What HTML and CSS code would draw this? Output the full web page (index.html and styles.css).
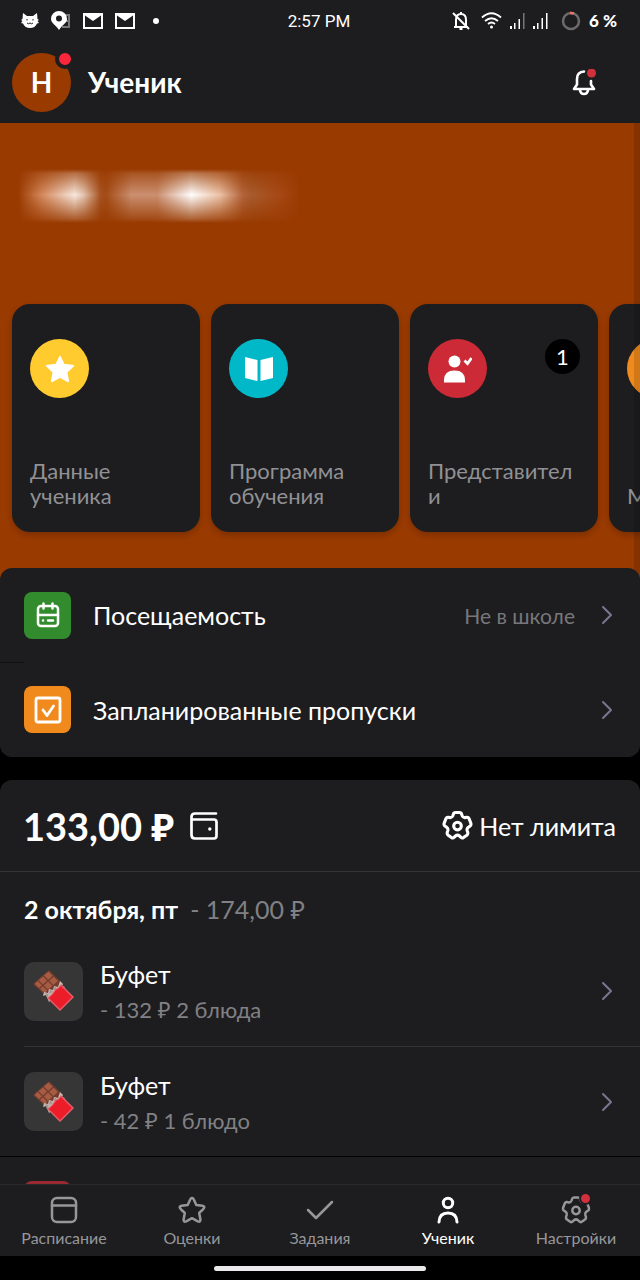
FILE: index.html
```html
<!DOCTYPE html>
<html lang="ru">
<head>
<meta charset="utf-8">
<meta name="viewport" content="width=device-width, initial-scale=1">
<title>Ученик</title>
<link rel="stylesheet" href="styles.css">
</head>
<body>
<svg class="defs" aria-hidden="true">
  <symbol id="gear" viewBox="0 0 30 30">
    <path d="M13 2.4H17Q18.6 2.4 19 4L19.5 5.6Q20.3 7.6 22.3 7.4L24 7.1Q25.5 6.9 26.2 8.4L27.9 12.8Q28.4 14.6 27.2 15.5L25.3 16.8Q23.9 18 24.3 19.8L24.9 21.6Q25.4 23.3 24 24.4L20.8 26.7Q19.4 27.6 18.3 26.4L17 25.2Q15 23.6 13 25.2L11.7 26.4Q10.6 27.6 9.2 26.7L6 24.4Q4.6 23.3 5.1 21.6L5.7 19.8Q6.1 18 4.7 16.8L2.8 15.5Q1.6 14.6 2.1 12.8L3.8 8.4Q4.5 6.9 6 7.1L7.7 7.4Q9.7 7.6 10.5 5.6L11 4Q11.4 2.4 13 2.4Z"/>
    <circle cx="15" cy="15.500" r="3.700"/>
  </symbol>
  <symbol id="chevron" viewBox="0 0 12 20">
    <path d="M2 2l8 8-8 8"/>
  </symbol>
  <symbol id="chocolate" viewBox="0 0 42 42">
    <path fill="#743c2b" d="M15 1Q16 0 17 1L30 14 13 26 1 15Q0 14 1 13Z"/>
    <path fill="#a65b45" d="M15.500 1.500l4.200 4.200-4.500 4-4.300-4.200zM20.700 6.700l4.200 4.200-4.500 4-4.300-4.200zM9.900 6.400l4.300 4.200-4.300 3.900-4.300-4.200zM15.100 11.600l4.300 4.200-4.300 3.900-4.300-4.200zM4.700 11.100l4.300 4.200-3 2.800-4.300-4.200zM9.800 16.300l4.300 4.200-2 2.800-5-4.300z"/>
    <path fill="#c9b9b4" d="M27 11l3 3-1 2 3 1-16 15-3-7-3 1 1-4 4 1 1-4 4 1 1-4 4 1z"/>
    <path fill="#a39590" d="M12 22l4 3-2 3zM17 19l3 3-4 2zM22 16l2 3-4 1z"/>
    <path fill="#e2606b" d="M28 14L41 27 27 41 14 28Q20 24 22 19Q26 18 28 14Z"/>
    <path fill="#ed1c29" d="M28 16L39 27 27 39 16 28Q21 24 23 20Q26 19 28 16Z"/>
  </symbol>
</svg>

<div class="app">
  <header class="top">
    <div class="status">
      <div class="status-left">
        <svg width="18" height="16" viewBox="0 0 18 16"><path fill="#fff" d="M2 0l4 3h6l4-3 .5 6 1.500 1-1.500 1 1.500 2-2 .5Q14 15 9 15T2 10.500L0 10l1.500-2L0 7l1.500-1z"/><path d="M6 6v1.500M12 6v1.500M6 10q1.500 1.500 3 0 1.500 1.500 3 0" fill="none" stroke="#1d1d1f" stroke-width="1"/></svg>
        <svg width="20" height="19" viewBox="0 0 20 19"><path d="M12 4h6v12h-7" fill="none" stroke="#77777a" stroke-width="2"/><path d="M12 10h6" stroke="#77777a" stroke-width="2"/><path fill="#fff" fill-rule="evenodd" d="M8 0a8 8 0 0 1 8 8c0 4-4 5-8 11C5 14 0 12 0 8a8 8 0 0 1 8-8zm0 4.500a3 3 0 1 0 0 6 3 3 0 0 0 0-6z"/></svg>
        <svg width="20" height="16" viewBox="0 0 20 16"><path fill="#fff" d="M0 0h20v16H0z"/><path fill="#1d1d1f" d="M2 2.500L10 8l8-5.500V14H2z"/><path fill="#fff" d="M4 0l6 6 6-6z"/></svg>
        <svg width="20" height="16" viewBox="0 0 20 16"><path fill="#fff" d="M0 0h20v16H0z"/><path fill="#1d1d1f" d="M2 2.500L10 8l8-5.500V14H2z"/><path fill="#fff" d="M4 0l6 6 6-6z"/></svg>
        <span class="status-dot"></span>
      </div>
      <time class="clock">2:57 PM</time>
      <div class="status-right">
        <svg class="muted" width="18" height="20" viewBox="0 0 18 20" fill="none" stroke="#fff" stroke-width="2"><path d="M4 15V9q0-6 5-6t5 6v6M2 16h14M9 1v2M1 2l16 16"/><path d="M7.500 18h3"/></svg>
        <svg width="21" height="17" viewBox="0 0 21 17" fill="none" stroke="#fff" stroke-width="1.700"><path d="M1 5.500Q10.500-3 20 5.500M4 9q6.500-5.500 13 0M7 12q3.500-3 7 0"/><circle cx="10.500" cy="15" r="1.500" fill="#fff" stroke="none"/></svg>
        <svg width="15" height="17" viewBox="0 0 15 17" fill="#fff"><path d="M0 14h2v3H0zM4 11h1.500v6H4zM8.500 7H10v10H8.500z"/><path fill="#77777a" d="M13 1h1.500v16H13z"/></svg>
        <svg width="15" height="17" viewBox="0 0 15 17" fill="#fff"><path d="M0 14h2v3H0zM4 11h1.500v6H4zM8.500 6H10v11H8.500zM13 1h1.500v16H13z"/></svg>
        <svg class="battery" width="20" height="20" viewBox="0 0 20 20" fill="none" stroke-width="2.500"><circle cx="10" cy="10" r="8" stroke="#6b6b6d"/><path d="M9 2q2-.2 4 .5" stroke="#ee7565"/></svg>
        <span>6 %</span>
      </div>
    </div>
    <div class="titlebar">
      <button class="avatar" aria-label="Профиль">Н<span class="avatar-dot"></span></button>
      <h1>Ученик</h1>
      <button class="bell" aria-label="Уведомления">
        <svg width="24" height="27" viewBox="0 0 24 27" fill="none" stroke="#fff" stroke-width="2.600" stroke-linecap="round" stroke-linejoin="round"><path d="M12 2.500Q5 2.800 5 10v5.500l-3 4.500h20l-3-4.500V12"/><path d="M8 21q.5 4 4 4t4-4"/><circle cx="19.500" cy="4" r="4.500" fill="#d2303d" stroke="none"/></svg>
      </button>
    </div>
  </header>

  <main class="content">
    <section class="hero">
      <div class="hidden-name"></div>
      <nav class="cards" aria-label="Разделы">
        <a class="card" href="#data">
          <span class="disc yellow"><svg width="30" height="28" viewBox="0 0 30 28"><path fill="#fff" stroke="#fff" stroke-width="1.500" stroke-linejoin="round" d="M15 1.500l4 8 9.500 1.300-6.800 6.400 1.700 9.300-8.400-4.400-8.400 4.400 1.700-9.300L1.500 10.800 11 9.500z"/></svg></span>
          <span class="card-label">Данные ученика</span>
        </a>
        <a class="card" href="#program">
          <span class="disc teal"><svg width="28" height="24" viewBox="0 0 28 24" fill="#fff"><path d="M0 0l12.500 3v21L0 21zM28 0L15.500 3v21L28 21z"/></svg></span>
          <span class="card-label">Программа обучения</span>
        </a>
        <a class="card" href="#guardians">
          <span class="disc red"><svg width="28" height="28" viewBox="0 0 28 28" fill="#fff"><circle cx="10.500" cy="6.500" r="6"/><path d="M0 27.500V25q0-9.500 10.500-9.500T21 25v2.500z"/><path d="M20.500 5.500l3 3 4-5.500" fill="none" stroke="#fff" stroke-width="2.800"/></svg></span>
          <span class="count">1</span>
          <span class="card-label">Представители</span>
        </a>
        <a class="card" href="#more">
          <span class="disc orange"></span>
          <span class="card-label">М</span>
        </a>
      </nav>
      <span class="scroll-shade"></span>
    </section>

    <section class="panel attendance">
      <a class="row" href="#attendance">
        <span class="tile green"><svg width="24" height="26" viewBox="0 0 24 26" fill="none" stroke="#fff" stroke-width="2.500" stroke-linecap="round"><rect x="2" y="4" width="20" height="20" rx="3"/><path d="M2 13h20M7.500 1.500v5M16.500 1.500v5M7 18.500h.1M12 18.500h5"/></svg></span>
        <span class="row-title">Посещаемость</span>
        <span class="row-note">Не в школе</span>
        <svg class="chevron" width="12" height="20"><use href="#chevron"/></svg>
      </a>
      <a class="row" href="#absences">
        <span class="tile amber"><svg width="28" height="28" viewBox="0 0 28 28" fill="none" stroke="#fff" stroke-width="2.800" stroke-linecap="round" stroke-linejoin="round"><rect x="2" y="2" width="24" height="24" rx="2"/><path d="M9 14l4 5.500L19.500 10"/></svg></span>
        <span class="row-title">Запланированные пропуски</span>
        <svg class="chevron" width="12" height="20"><use href="#chevron"/></svg>
      </a>
    </section>

    <section class="panel money">
      <div class="balance">
        <strong>133,00 ₽</strong>
        <svg width="28" height="28" viewBox="0 0 28 28" fill="none" stroke="#fff" stroke-width="2.700" stroke-linecap="round" stroke-linejoin="round"><path d="M26 1.500H5Q1.500 1.500 1.500 5v18Q1.500 26.500 5 26.500h19q2.500 0 2.500-3V10Q26.500 7.500 24 7.500H2"/><circle cx="19.800" cy="17" r="1.700" fill="#fff" stroke="none"/></svg>
        <button class="limit"><svg class="gear" width="31" height="31"><use href="#gear"/></svg>Нет лимита</button>
      </div>
      <h2 class="day">2 октября, пт <span>- 174,00 ₽</span></h2>
      <a class="purchase" href="#p1">
        <span class="thumb"><svg width="42" height="42"><use href="#chocolate"/></svg></span>
        <span class="purchase-text"><span>Буфет</span><small>- 132 ₽ 2 блюда</small></span>
        <svg class="chevron" width="12" height="20"><use href="#chevron"/></svg>
      </a>
      <a class="purchase" href="#p2">
        <span class="thumb"><svg width="42" height="42"><use href="#chocolate"/></svg></span>
        <span class="purchase-text"><span>Буфет</span><small>- 42 ₽ 1 блюдо</small></span>
        <svg class="chevron" width="12" height="20"><use href="#chevron"/></svg>
      </a>
    </section>
    <section class="next"><span class="tile crimson"></span></section>
  </main>

  <nav class="tabs" aria-label="Основная навигация">
    <a href="#schedule"><svg width="30" height="30" viewBox="0 0 30 30"><rect x="3" y="3" width="24" height="24" rx="5"/><path d="M3 10.500h24"/></svg>Расписание</a>
    <a href="#grades"><svg width="30" height="30" viewBox="0 0 30 30"><path d="M15 3Q16.200 3 16.800 4.500L19.300 10 25.500 10.800Q28.500 11.500 26.500 13.800L22.200 18 23.400 24.500Q23.500 27.500 20.800 26.300L15 23.200 9.200 26.300Q6.500 27.500 6.600 24.500L7.800 18 3.500 13.800Q1.500 11.500 4.500 10.800L10.700 10 13.200 4.500Q13.800 3 15 3Z"/></svg>Оценки</a>
    <a href="#tasks"><svg width="30" height="30" viewBox="0 0 30 30"><path d="M3 15l8 8L27 7"/></svg>Задания</a>
    <a class="active" href="#student" aria-current="page"><svg width="30" height="30" viewBox="0 0 30 30"><circle cx="15" cy="8" r="4.700"/><path d="M6 27q.3-9 9-9t9 9"/></svg>Ученик</a>
    <a href="#settings"><span class="tab-icon"><svg width="30" height="30"><use href="#gear"/></svg><span class="tab-dot"></span></span>Настройки</a>
  </nav>
  <div class="home"><span></span></div>
</div>
</body>
</html>
```

FILE: styles.css
```css
* { box-sizing: border-box; }
body { margin: 0; background: #000; color: #fff; font-family: Lato, "Noto Sans", sans-serif; }
a { color: inherit; text-decoration: none; }
button { border: 0; padding: 0; background: none; color: inherit; font: inherit; cursor: pointer; }
svg { flex: none; display: block; }
.defs { position: absolute; width: 0; height: 0; }

.app { display: flex; flex-direction: column; height: 100vh; overflow: hidden; }

.top { flex: none; background: #1d1d1f; }
.status { display: grid; grid-template-columns: 1fr auto 1fr; align-items: center; height: 41px; padding: 0 23px 0 21px; }
.status-left { display: flex; align-items: center; gap: 12px; }
.status-dot { width: 6px; height: 6px; margin-left: 6px; border-radius: 50%; background: #fff; }
.clock { font-family: Roboto, sans-serif; font-size: 17px; }
.status-right { display: flex; align-items: center; justify-content: flex-end; gap: 8px; font-size: 17px; font-weight: 900; }
.muted { margin-right: 3px; }
.battery { margin-left: 5px; }

.titlebar { display: flex; align-items: center; gap: 17px; height: 82px; padding: 0 44px 0 12px; }
.avatar { position: relative; width: 59px; height: 59px; border-radius: 50%; background: #993a00; font-size: 28px; font-weight: 700; }
.avatar-dot { position: absolute; top: -4px; right: -4px; width: 20px; height: 20px; border: 4px solid #1d1d1f; border-radius: 50%; background: #f9263c; }
.titlebar h1 { margin: 0; font-size: 28px; line-height: 34px; font-weight: 700; }
.bell { margin-left: auto; }

.content { flex: 1; min-height: 0; overflow: hidden; }

.hero { position: relative; padding: 46px 0 48px; background: #993a00; }
.hidden-name {
  width: 284px; height: 54px; margin: 0 18px;
  background: linear-gradient(90deg, rgba(247,232,222,0), rgba(235,165,125,.7) 8%, #f7e8de 20%, rgba(247,232,222,.8) 23%, rgba(247,232,222,.15) 29%, rgba(225,180,150,.15) 31%, rgba(215,165,140,.8) 40%, rgba(215,165,140,.8) 49%, #fff 61%, rgba(245,210,185,.9) 71%, rgba(190,120,85,.7) 79%, rgba(175,110,70,.65) 82%, rgba(190,100,60,.4) 91%, rgba(190,100,60,0));
  -webkit-mask-image: linear-gradient(transparent, rgba(0,0,0,.32) 8%, #000 48%, rgba(0,0,0,.22) 92%, transparent);
  mask-image: linear-gradient(transparent, rgba(0,0,0,.32) 8%, #000 48%, rgba(0,0,0,.22) 92%, transparent);
}
.scroll-shade { position: absolute; inset: 0 0 0 auto; width: 6px; background: rgba(0,0,0,.13); }
.cards { display: flex; gap: 11px; margin-top: 81px; padding-left: 12px; overflow: visible; }
.card { position: relative; flex: none; display: flex; flex-direction: column; justify-content: space-between; width: 188px; height: 228px; padding: 35px 18px 24px; border-radius: 18px; background: #1d1d1f; box-shadow: 0 3px 6px rgba(0,0,0,.2); }
.card-label { color: #919195; font-size: 22px; line-height: 25px; overflow-wrap: anywhere; }
.disc { display: grid; place-items: center; width: 59px; height: 59px; border-radius: 50%; }
.yellow { background: #ffcb2f; }
.teal { background: #00b8c8; }
.red { background: #cb2a36; }
.orange { background: #f08a1d; }
.count { position: absolute; top: 35px; right: 18px; width: 35px; height: 35px; border-radius: 50%; background: #000; font-size: 22px; line-height: 35px; text-align: center; }

.panel { background: #1d1d1f; border-radius: 12px; }
.attendance { position: relative; margin-top: -12px; }
.row { display: flex; align-items: center; min-height: 94px; padding: 0 27px 0 24px; }
.row + .row { min-height: 95px; background: linear-gradient(#101012, #101012) 0 0 / 24px 1px no-repeat; }
.tile { flex: none; display: grid; place-items: center; width: 47px; height: 47px; border-radius: 8px; }
.green { background: #328c2d; }
.amber { background: #f08a1d; }
.crimson { background: #9b2932; }
.row-title { flex: 1; margin-left: 22px; font-size: 25px; line-height: 30px; }
.row-note { margin-right: 26px; color: #77777b; font-size: 21px; }
.chevron { fill: none; stroke: #777791; stroke-width: 2; stroke-linecap: round; stroke-linejoin: round; }

.money { margin-top: 23px; border-radius: 12px 12px 0 0; }
.balance { display: flex; align-items: center; gap: 16px; height: 92px; padding: 0 24px 0 23px; border-bottom: 1px solid #333335; }
.balance strong { font-size: 38px; }
.limit { display: flex; align-items: center; gap: 6px; margin-left: auto; font-size: 25px; }
.gear { fill: none; stroke: #fff; stroke-width: 3; }
.day { margin: 0; padding: 22px 24px 12px; font-size: 25px; line-height: 30px; font-weight: 700; }
.day span { margin-left: 6px; color: #818185; font-weight: 400; }
.purchase { display: flex; align-items: center; height: 110px; padding-right: 27px; margin-left: 24px; }
.purchase + .purchase { border-top: 1px solid #333335; }
.thumb { display: grid; place-items: center; width: 59px; height: 59px; border-radius: 10px; background: #363637; }
.purchase-text { flex: 1; display: flex; flex-direction: column; gap: 9px; margin-left: 17px; font-size: 25px; line-height: 28px; }
.purchase-text small { color: #818185; font-size: 22px; line-height: 25px; }
.next { margin-top: 1px; padding: 24px; background: #1d1d1f; }

.tabs { flex: none; display: grid; grid-template-columns: repeat(5, 1fr); height: 72px; border-top: 1px solid #2a2a2c; background: #1d1d1f; }
.tabs a { display: flex; flex-direction: column; align-items: center; gap: 4px; padding-top: 10px; color: #97979a; font-size: 16px; line-height: 18px; }
.tabs svg { fill: none; stroke: currentColor; stroke-width: 2.500; stroke-linecap: round; stroke-linejoin: round; }
.tabs .active { color: #fff; }
.tabs .active svg { stroke-width: 3; }
.tab-icon { position: relative; }
.tab-dot { position: absolute; top: -3px; right: -1px; width: 13px; height: 13px; border: 2px solid #1d1d1f; border-radius: 50%; background: #d2303d; }
.home { flex: none; display: grid; place-items: center; height: 24px; }
.home span { width: 33%; height: 5px; border-radius: 3px; background: #eae8ea; }
```
